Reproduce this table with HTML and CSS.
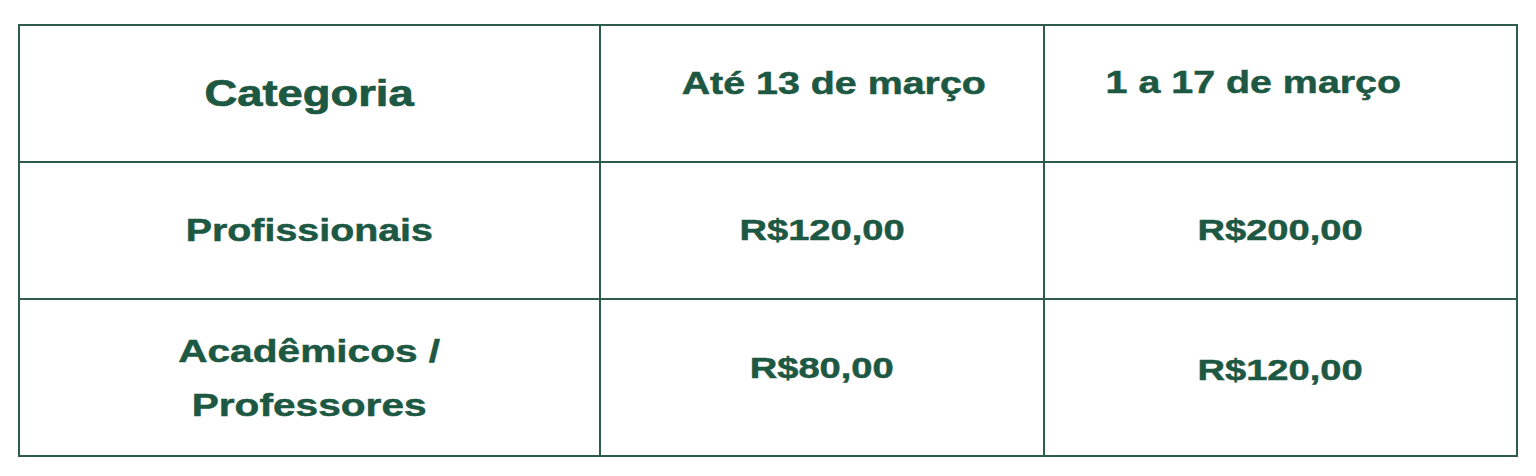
FILE: index.html
```html
<!DOCTYPE html>
<html lang="pt-BR">
<head>
<meta charset="utf-8">
<title>Categorias</title>
<link rel="stylesheet" href="styles.css">
</head>
<body>
<div class="table">
  <div class="cell head c1"><span class="t t-cat">Categoria</span></div>
  <div class="cell head c2"><span class="t t-date">Até 13 de março</span></div>
  <div class="cell head c3"><span class="t t-date">1 a 17 de março</span></div>

  <div class="cell"><span class="t t-row">Profissionais</span></div>
  <div class="cell"><span class="t t-price">R$120,00</span></div>
  <div class="cell"><span class="t t-price">R$200,00</span></div>

  <div class="cell"><span class="t t-multi">Acadêmicos /<br>Professores</span></div>
  <div class="cell up"><span class="t t-price">R$80,00</span></div>
  <div class="cell up2"><span class="t t-price">R$120,00</span></div>
</div>
</body>
</html>
```

FILE: styles.css
```css
html, body {
  margin: 0;
  padding: 0;
  background: #ffffff;
}

body {
  padding: 24px 18px 0 18px;
  font-family: "Liberation Sans", Arial, sans-serif;
  font-weight: bold;
  color: #1d5843;
}

.table {
  width: 1500px;
  box-sizing: border-box;
  display: grid;
  grid-template-columns: 579px 442px 471px;
  grid-template-rows: 135px 135px 155px;
  gap: 2px;
  padding: 2px;
  background: #2d5c4c;
}

.cell {
  background: #ffffff;
  display: flex;
  align-items: center;
  justify-content: center;
  text-align: center;
  box-sizing: border-box;
}

.t {
  display: inline-block;
  transform: scaleX(1.27);
  line-height: 1.15;
  white-space: nowrap;
  -webkit-text-stroke: 0.5px currentColor;
}

.t-cat {
  font-size: 36px;
  transform: scaleX(1.26);
  -webkit-text-stroke: 0.7px currentColor;
}

.t-date {
  font-size: 31px;
}

.head.c2 {
  padding: 0 0 20px 24px;
}

.head.c3 {
  padding: 0 54px 22px 0;
}

.t-row {
  font-size: 31px;
}

.t-price {
  font-size: 30px;
}

.t-multi {
  font-size: 32px;
  line-height: 54px;
}

.up {
  padding-bottom: 18px;
}

.up2 {
  padding-bottom: 14px;
}
```
